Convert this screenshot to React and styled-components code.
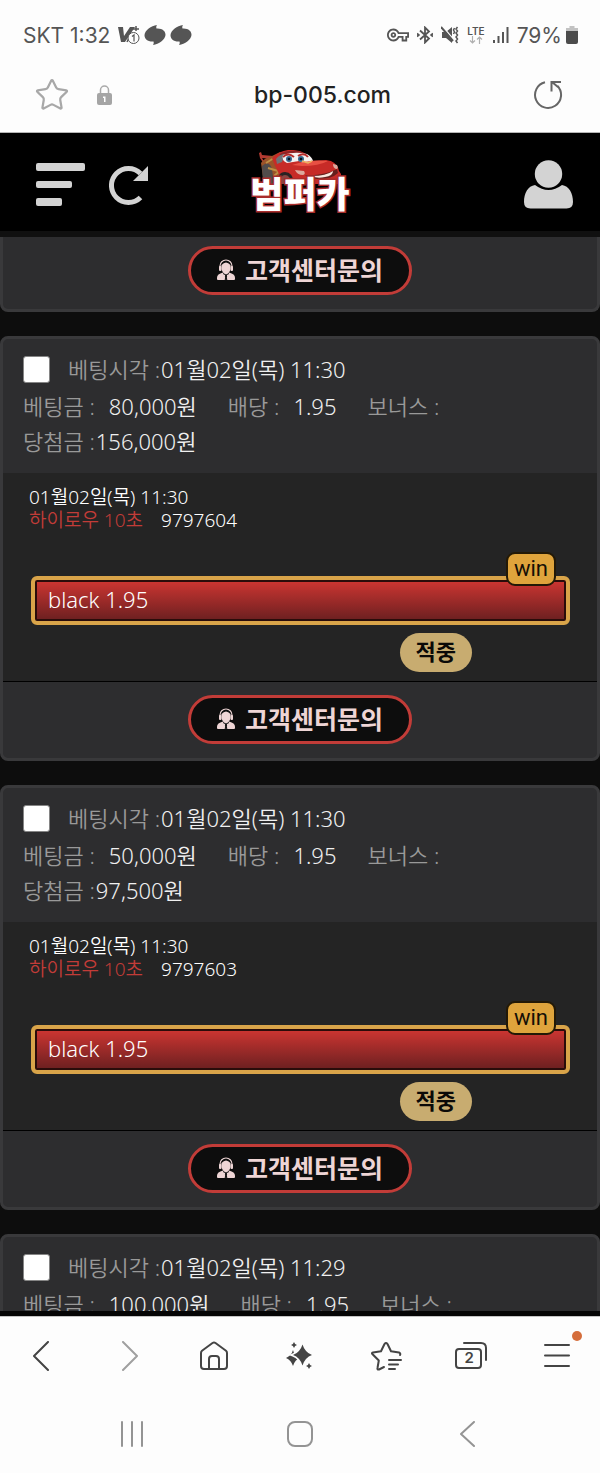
import React from 'react'
import styled, {createGlobalStyle} from 'styled-components'
import {Star} from 'lucide-react'
import {MdOutlineVpnKey} from 'react-icons/md'

const theme = {
    kr: '"Noto Sans CJK KR", sans-serif',
    betting: '"Noto Sans", "Noto Sans CJK KR", sans-serif',
    system: 'Inter, "Noto Sans CJK KR", sans-serif',
    page: '#0d0d0d',
    card: '#2d2d2f',
    cardBorder: '#39393b',
    body: '#242424',
    label: '#999',
    text: '#f0f0f0',
    red: '#c23c38',
    gold: '#d9a449'
}

const GlobalStyle = createGlobalStyle`
    * {
        box-sizing: border-box;
    }
    body {
        margin: 0;
        background: #fff;
        font-family: ${theme.kr};
    }
    button {
        font: inherit;
        color: inherit;
        border: none;
        background: none;
        padding: 0;
    }
    svg {
        display: block;
        flex: none;
    }
`

const Phone = styled.div`
    display: flex;
    flex-direction: column;
    height: 100vh;
    background: #fdfdfd;
`

const StatusBar = styled.div`
    display: flex;
    align-items: center;
    justify-content: space-between;
    height: 70px;
    padding: 0 22px 0 23px;
    font-family: ${theme.system};
    font-size: 21px;
    color: #555;
`

const StatusGroup = styled.div`
    display: flex;
    align-items: center;
    gap: ${({gap}) => gap}px;
`

const Carrier = styled.span`
    margin-right: 4px;
`

const Network = styled.div`
    display: flex;
    flex-direction: column;
    align-items: center;
    font-size: 10px;
    line-height: 10px;
    font-weight: 600;
`

const Battery = styled.div`
    display: flex;
    align-items: center;
    gap: 4px;
`

const AddressBar = styled.div`
    display: grid;
    grid-template-columns: 1fr auto 1fr;
    align-items: center;
    height: 63px;
    padding: 0 37px 12px 34px;
    border-bottom: 1px solid #b5b5b5;
`

const AddressSide = styled.div`
    display: flex;
    align-items: center;
    gap: 27px;
    justify-content: ${({end}) => end ? 'flex-end' : 'flex-start'};
`

const Address = styled.span`
    font-family: ${theme.system};
    font-size: 23px;
    line-height: 28px;
    font-weight: 500;
    color: #222;
    margin-left: 48px;
`

const Header = styled.header`
    display: grid;
    grid-template-columns: 1fr auto 1fr;
    align-items: center;
    flex: none;
    height: 98px;
    padding: 0 27px;
    background: #000;
    color: #d3d3d3;
`

const HeaderSide = styled.div`
    display: flex;
    align-items: center;
    gap: 24px;
    padding-top: 5px;
    padding-left: 9px;
    justify-content: ${({end}) => end ? 'flex-end' : 'flex-start'};
`

const Logo = styled.a`
    display: flex;
    flex-direction: column;
    align-items: center;
    padding-bottom: 5px;
    text-decoration: none;
`

const LogoText = styled.span`
    margin-top: -10px;
    font-size: 36px;
    line-height: 36px;
    font-weight: 900;
    color: #fff;
    -webkit-text-stroke: 3px #a92d2c;
    paint-order: stroke fill;
`

const List = styled.main`
    flex: 1;
    min-height: 0;
    overflow-y: auto;
    scrollbar-width: none;
    display: flex;
    flex-direction: column;
    gap: 24px;
    background: ${theme.page};
    border-top: 6px solid #101010;
    border-bottom: 5px solid #050505;
    font-family: ${theme.betting};
`

const Card = styled.section`
    flex: none;
    background: ${theme.card};
    border: 3px solid ${theme.cardBorder};
    border-radius: 8px;
    ${({cut}) => cut && `
        border-top: none;
        border-top-left-radius: 0;
        border-top-right-radius: 0;
    `}
`

const Summary = styled.div`
    padding: 11px 20px 14px;
    font-size: 22px;
    line-height: 35px;
    font-weight: 350;
    color: ${theme.text};
`

const TimeRow = styled.label`
    display: flex;
    align-items: center;
    gap: 18px;
    height: 39px;
`

const Row = styled.div`
    display: flex;
    gap: 31px;
    height: 35px;
`

const Field = styled.span`
    display: flex;
    gap: ${({tight}) => tight ? 1 : 14}px;
    white-space: nowrap;
`

const Label = styled.span`
    color: ${theme.label};
`

const Check = styled.input`
    appearance: none;
    width: 27px;
    height: 27px;
    margin: 0;
    background: #fff;
    border: 1px solid #858585;
    border-radius: 3px;
    &:checked {
        background: ${theme.red};
    }
`

const Detail = styled.div`
    padding: 13px 27px 9px 28px;
    background: ${theme.body};
    border-bottom: 1px solid #000;
    font-size: 19px;
    line-height: 23px;
    font-weight: 350;
    color: #fff;
`

const Game = styled.div`
    display: flex;
    gap: 18px;
`

const GameName = styled.span`
    color: ${theme.red};
`

const Info = styled.div`
    margin-left: -2px;
`

const Pick = styled.div`
    position: relative;
    display: flex;
    align-items: center;
    height: 49px;
    margin-top: 44px;
    padding: 0 13px 2px;
    border: 4px solid ${theme.gold};
    border-radius: 6px;
    box-shadow: inset 0 0 0 2px #2a0c0a;
    background: linear-gradient(#cf3632, #6a1f20) padding-box;
    font-size: 22px;
`

const WinBadge = styled.span`
    position: absolute;
    top: -28px;
    right: 10px;
    padding: 0 6px;
    border: 2px solid #231906;
    border-radius: 9px;
    background: #dfa43c;
    color: #150f06;
    font-family: Roboto, sans-serif;
    font-weight: 400;
    font-size: 22px;
    line-height: 30px;
`

const Result = styled.div`
    display: flex;
    justify-content: flex-end;
    margin-top: 8px;
    padding-right: 98px;
`

const ResultPill = styled.span`
    height: 39px;
    padding: 0 16px;
    border-radius: 20px;
    background: #c8ac70;
    color: #0b0a08;
    font-size: 22px;
    line-height: 36px;
    font-weight: 700;
`

const CardFooter = styled.div`
    display: flex;
    justify-content: center;
    padding: ${({cut}) => cut ? 9 : 13}px 0 14px;
`

const SupportButton = styled.button`
    display: flex;
    align-items: center;
    gap: 10px;
    height: 49px;
    padding: 0 26px 2px;
    border: 3px solid ${theme.red};
    border-radius: 25px;
    background: #0d0d0d;
    color: #eed5d5;
    font-size: 25px;
    line-height: 36px;
    font-weight: 700;
    white-space: nowrap;
`

const Toolbar = styled.nav`
    display: grid;
    grid-template-columns: repeat(7, 1fr);
    flex: none;
    height: 79px;
    border-top: 1px solid #c4c4c4;
    color: #444;
`

const SystemBar = styled.nav`
    display: grid;
    grid-template-columns: repeat(3, 1fr);
    flex: none;
    height: 78px;
    padding: 0 48px;
    color: #949494;
`

const IconButton = styled.button`
    position: relative;
    display: flex;
    align-items: center;
    justify-content: center;
    ${({dim}) => dim && 'color: #a0a0a0;'}
`

const Dot = styled.i`
    position: absolute;
    top: 14px;
    right: 18px;
    width: 10px;
    height: 10px;
    border-radius: 50%;
    background: #d56d3b;
`

const line = {fill: 'none', stroke: 'currentColor', strokeWidth: 2, strokeLinecap: 'round', strokeLinejoin: 'round'}

const V3Icon = () => (
    <svg width="22" height="20" viewBox="0 0 22 20">
        <path d="M0 2h5l1 9 6-9h5L7 17H3z" fill="currentColor" />
        <path d="M18 1v5M15 4h6M9 17l4-8" stroke="currentColor" strokeWidth="1.5" />
        <circle cx="15.500" cy="13" r="5.500" fill="#fdfdfd" stroke="currentColor" />
        <path d="M14 11.500l2-1.500v6.500" fill="none" stroke="currentColor" strokeWidth="1.200" />
    </svg>
)

const SwirlIcon = () => (
    <svg width="22" height="20" viewBox="0 0 22 20" fill="currentColor">
        <path d="M13 0C7 1 1 5 .5 10 .3 14 4 17 9.500 16.500c.5 1.200.2 2.500-.5 3.500 6-1 12-5 12.500-10C21.700 6 18 3 12.500 3.500 12 2.300 12.300 1 13 0z" />
    </svg>
)

const BluetoothIcon = () => (
    <svg width="16" height="18" viewBox="0 0 16 18" fill="none" stroke="currentColor" strokeWidth="1.800">
        <path d="M3 4.500l9 8-4 4V1.500l4 4-9 8" />
        <path d="M0 7.500L1.800 9 0 10.500M16 7.500L14.200 9l1.800 1.500" />
    </svg>
)

const MuteIcon = () => (
    <svg width="18" height="18" viewBox="0 0 18 18">
        <path d="M1 6h4l6-5v16l-6-5H1z" fill="currentColor" />
        <path d="M2 1l11 13" stroke="#fdfdfd" strokeWidth="1.500" />
        <path d="M0 1l12 14" stroke="currentColor" strokeWidth="2" />
        <path d="M13.500 2L12.500 4l1 2-1 2M16.500 1l-1.500 2 1.500 2L15 7l1.500 2-1.500 2 1.500 2-1.500 2 1.500 2" fill="none" stroke="currentColor" strokeWidth="1.500" />
    </svg>
)

const DataIcon = () => (
    <svg width="14" height="8" viewBox="0 0 14 8" fill="none" stroke="#b0b0b0" strokeWidth="1.200">
        <path d="M3.500 0v7M1 4.500L3.500 7 6 4.500M10.500 8V1M8 3.500L10.500 1 13 3.500" />
    </svg>
)

const SignalIcon = () => (
    <svg width="16" height="16" viewBox="0 0 16 16" stroke="currentColor" strokeWidth="2">
        <path d="M1 13v3M5.500 9v7M10 5v11M14.500 0v16" />
    </svg>
)

const BatteryIcon = () => (
    <svg width="12" height="18" viewBox="0 0 12 18">
        <path d="M3.500 0h5v2H12v5H0V2h3.500z" fill="#c2c2c2" />
        <path d="M0 5h12v11a2 2 0 0 1-2 2H2a2 2 0 0 1-2-2z" fill="#4c4c4c" />
    </svg>
)

const LockIcon = () => (
    <svg width="15" height="21" viewBox="0 0 15 21">
        <path d="M3.500 9V5a4 4 0 0 1 8 0v4" fill="none" stroke="#aaa" strokeWidth="1.500" />
        <rect y="8" width="15" height="12" rx="2" fill="#a5a5a5" />
        <path d="M6 11.500h2.500V17H7v-4H6z" fill="#fff" />
    </svg>
)

const ReloadIcon = () => (
    <svg width="30" height="30" viewBox="0 0 30 30" fill="none" stroke="#666" strokeWidth="2">
        <path d="M12 2.300A13 13 0 1 0 24.500 6" />
        <path d="M28 2H18.500v9.500M19 2l6 5" />
    </svg>
)

const MenuIcon = () => (
    <svg width="49" height="43" viewBox="0 0 49 43" fill="currentColor">
        <rect width="49" height="8" rx="2" />
        <rect y="18" width="36" height="7" rx="2" />
        <rect y="35" width="26" height="8" rx="2" />
    </svg>
)

const RefreshIcon = () => (
    <svg width="40" height="40" viewBox="0 0 40 40">
        <path d="M31.500 8.500A17 17 0 1 0 31.500 32.500" fill="none" stroke="currentColor" strokeWidth="5" />
        <path d="M39 1v15H24z" fill="currentColor" />
    </svg>
)

const UserIcon = () => (
    <svg width="49" height="49" viewBox="0 0 49 49" fill="currentColor">
        <circle cx="24.500" cy="14" r="13.700" />
        <path d="M11 25q13.500 10 27 0c7 1 11 8 11 17q0 6.500-6.500 6.500h-36Q0 48.500 0 42c0-9 4-16 11-17z" />
    </svg>
)

const CarIcon = () => (
    <svg width="84" height="34" viewBox="0 0 84 34">
        <path d="M1 3l2-1 1 3 11 1v3L4 8l4 6H6L2 8z" fill="#b23a31" />
        <path d="M3 13q3-5 11-7L22 2l8 5-2 11v16H6z" fill="#9b5329" />
        <path d="M4 16q7-6 10 3l2 15H5z" fill="#514c4b" />
        <path d="M8 13l8-5M10 18l10 3M16 26l8-7" stroke="#bd9045" strokeWidth="2" />
        <path d="M14 8Q21 1 30 0q18-1 24 11l14-1q11 1 13 11l2 3v10H28q-8-9-14-26z" fill="#c72b27" />
        <path d="M22 5q9-5 22-2" fill="none" stroke="#8c2425" strokeWidth="2" />
        <path d="M18 9q4-5 9-5l-3 8-5 2z" fill="#6f7478" />
        <path d="M25 5q12-4 24-1 5 3 6 7l-10 2-4-2-12 2q-6-3-4-8z" fill="#f5f1f0" />
        <path d="M25 7q5-5 11 0M40 6q6-4 10 1" fill="none" stroke="#b42b29" strokeWidth="2" />
        <ellipse cx="31" cy="9" rx="3" ry="3" fill="#35688f" />
        <ellipse cx="43" cy="9" rx="3" ry="3" fill="#35688f" />
        <circle cx="31" cy="9" r="1.300" fill="#07121c" />
        <circle cx="43" cy="9" r="1.300" fill="#07121c" />
        <path d="M34 15q18-6 36-4-9 5-26 5z" fill="#e85043" />
        <path d="M44 11l6 2 4-2" fill="none" stroke="#edb25f" strokeWidth="1.500" />
        <path d="M20 34q-1-12 7-12t9 12z" fill="#292222" />
        <path d="M22 34q0-9 5-9t7 9z" fill="#8b4540" />
        <path d="M37 20l9 1q2 3-1 4-6 0-8-5zM75 14l4 1q2 4-1 4-3-1-3-5z" fill="#dca99e" />
        <path d="M47 25q19 1 32-6l1 4q-6 6-20 6-9 0-13-4z" fill="#65201d" />
        <path d="M54 26q14 0 21-5 0 5-8 6-8 2-13-1z" fill="#fae8df" />
    </svg>
)

const AgentIcon = () => (
    <svg width="18" height="21" viewBox="0 0 18 21">
        <path d="M3 10V7a6 6 0 0 1 12 0v3" fill="none" stroke="currentColor" strokeWidth="1.100" />
        <rect x="2" y="7" width="2.500" height="5" rx="1" fill="currentColor" />
        <rect x="13.500" y="7" width="2.500" height="5" rx="1" fill="currentColor" />
        <path d="M4.500 6q4.500-5 9 0v4q-1 4.500-4.500 4.500T4.500 10z" fill="currentColor" />
        <path d="M0 20v-1.500Q0 15 6 13.500h6q6 1.500 6 5V20q0 1-1 1H1q-1 0-1-1z" fill="currentColor" />
        <path d="M6 14.500l3 1.500 3-1.500M9 16l.8 1-.5 1 .5 3H8.200l.5-3-.5-1z" fill="none" stroke="#0d0d0d" strokeWidth="1" />
    </svg>
)

const HomeIcon = () => (
    <svg width="30" height="30" viewBox="0 0 30 30" {...line}>
        <path d="M2 12q0-1.500 1-2.300L13.500 2q1.500-1 3 0L27 9.700q1 .8 1 2.300v13q0 3-3 3H5q-3 0-3-3z" />
        <path d="M10 28V18q0-3 3-3h4q3 0 3 3v10" />
    </svg>
)

const SparkleIcon = () => (
    <svg width="30" height="30" viewBox="0 0 30 30" fill="currentColor">
        <path d="M9 1q.7 2.300 3 3-2.300.7-3 3-.7-2.300-3-3 2.300-.7 3-3z" />
        <path d="M8 9q1 5.500 7 8-5 1.500-7 8-2-6-7-8 5.500-2.500 7-8z" />
        <path d="M17.500 3.500q2.500 8 9.500 10.500-7 2.500-9.500 10.500Q15 16.500 8 14q7-2.500 9.500-10.500z" stroke="#fdfdfd" strokeWidth="3" paintOrder="stroke" />
        <path d="M24 22q.7 2.300 3 3-2.300.7-3 3-.7-2.300-3-3 2.300-.7 3-3z" />
    </svg>
)

const StarListIcon = () => (
    <svg width="32" height="30" viewBox="0 0 32 30" {...line}>
        <path d="M14 26l-5 2.500q-2 .5-1.500-1.500l1.300-7.500-6-6Q1 12 3 11.500l8-1.200L14.500 3q1.500-2 3 0l3.500 7.300 8 1.200q2 .8 1 2.500" />
        <path d="M19 19h12M19 23.500h9M19 28h6" />
    </svg>
)

const TabsBox = styled.span`
    position: relative;
    font-family: ${theme.system};
    font-size: 15px;
    line-height: 30px;
    font-weight: 600;
    width: 32px;
    height: 30px;
    text-align: left;
    padding-left: 9px;
    padding-top: 2px;
    svg {
        position: absolute;
        left: 0;
        top: 0;
    }
`

const TabsIcon = () => (
    <TabsBox>
        <svg width="32" height="30" viewBox="0 0 32 30" {...line}>
            <rect x="1" y="8" width="25" height="19" rx="3" />
            <path d="M9 2h17q5 0 5 5v12" />
        </svg>
        2
    </TabsBox>
)

const Support = () => (
    <SupportButton type="button"><AgentIcon />고객센터문의</SupportButton>
)

const bets = [
    {id: 1, time: '01월02일(목) 11:30', stake: '80,000원', odds: '1.95', prize: '156,000원', round: '9797604'},
    {id: 2, time: '01월02일(목) 11:30', stake: '50,000원', odds: '1.95', prize: '97,500원', round: '9797603'},
    {id: 3, time: '01월02일(목) 11:29', stake: '100,000원', odds: '1.95', prize: '195,000원', round: '9797602'}
]

const BetCard = ({bet}) => (
    <Card>
        <Summary>
            <TimeRow>
                <Check type="checkbox" />
                <Field tight><Label>베팅시각 :</Label>{bet.time}</Field>
            </TimeRow>
            <Row>
                <Field><Label>베팅금 :</Label>{bet.stake}</Field>
                <Field><Label>배당 :</Label>{bet.odds}</Field>
                <Field><Label>보너스 :</Label></Field>
            </Row>
            <Row>
                <Field tight><Label>당첨금 :</Label>{bet.prize}</Field>
            </Row>
        </Summary>
        <Detail>
            <Info>
                <div>{bet.time}</div>
                <Game><GameName>하이로우 10초</GameName>{bet.round}</Game>
            </Info>
            <Pick>
                black {bet.odds}
                <WinBadge>win</WinBadge>
            </Pick>
            <Result><ResultPill>적중</ResultPill></Result>
        </Detail>
        <CardFooter><Support /></CardFooter>
    </Card>
)

export default function App() {
    return (
        <Phone>
            <GlobalStyle />
            <StatusBar>
                <StatusGroup gap={4}>
                    <Carrier>SKT 1:32</Carrier>
                    <V3Icon />
                    <SwirlIcon />
                    <SwirlIcon />
                </StatusGroup>
                <StatusGroup gap={8}>
                    <MdOutlineVpnKey size={22} />
                    <BluetoothIcon />
                    <MuteIcon />
                    <Network>LTE<DataIcon /></Network>
                    <SignalIcon />
                    <Battery>79%<BatteryIcon /></Battery>
                </StatusGroup>
            </StatusBar>
            <AddressBar>
                <AddressSide>
                    <IconButton type="button" aria-label="Bookmark"><Star size={36} strokeWidth={1.5} color="#a8a8a8" /></IconButton>
                    <LockIcon />
                </AddressSide>
                <Address>bp-005.com</Address>
                <AddressSide end>
                    <IconButton type="button" aria-label="Reload"><ReloadIcon /></IconButton>
                </AddressSide>
            </AddressBar>
            <Header>
                <HeaderSide>
                    <IconButton type="button" aria-label="Menu"><MenuIcon /></IconButton>
                    <IconButton type="button" aria-label="Refresh"><RefreshIcon /></IconButton>
                </HeaderSide>
                <Logo href="#"><CarIcon /><LogoText>범퍼카</LogoText></Logo>
                <HeaderSide end>
                    <IconButton type="button" aria-label="Account"><UserIcon /></IconButton>
                </HeaderSide>
            </Header>
            <List>
                <Card cut><CardFooter cut><Support /></CardFooter></Card>
                {bets.map(bet => <BetCard key={bet.id} bet={bet} />)}
            </List>
            <Toolbar>
                <IconButton type="button" aria-label="Back">
                    <svg width="20" height="30" viewBox="0 0 20 30" {...line}><path d="M15 1L1 15l14 14" /></svg>
                </IconButton>
                <IconButton type="button" aria-label="Forward" dim>
                    <svg width="20" height="30" viewBox="0 0 20 30" {...line}><path d="M4 1l14 14L4 29" /></svg>
                </IconButton>
                <IconButton type="button" aria-label="Home"><HomeIcon /></IconButton>
                <IconButton type="button" aria-label="Assist"><SparkleIcon /></IconButton>
                <IconButton type="button" aria-label="Bookmarks"><StarListIcon /></IconButton>
                <IconButton type="button" aria-label="Tabs"><TabsIcon /></IconButton>
                <IconButton type="button" aria-label="Tools">
                    <svg width="26" height="24" viewBox="0 0 26 24" {...line}><path d="M1 1h24M1 11.500h24M1 22h24" /></svg>
                    <Dot />
                </IconButton>
            </Toolbar>
            <SystemBar>
                <IconButton type="button" aria-label="Recents">
                    <svg width="24" height="26" viewBox="0 0 24 26" {...line}><path d="M2 1v24M12 1v24M22 1v24" /></svg>
                </IconButton>
                <IconButton type="button" aria-label="Home screen">
                    <svg width="26" height="26" viewBox="0 0 26 26" {...line}><rect x="1" y="1" width="24" height="24" rx="7" /></svg>
                </IconButton>
                <IconButton type="button" aria-label="Go back">
                    <svg width="16" height="26" viewBox="0 0 16 26" {...line}><path d="M14 1L1 13l13 12" /></svg>
                </IconButton>
            </SystemBar>
        </Phone>
    )
}
